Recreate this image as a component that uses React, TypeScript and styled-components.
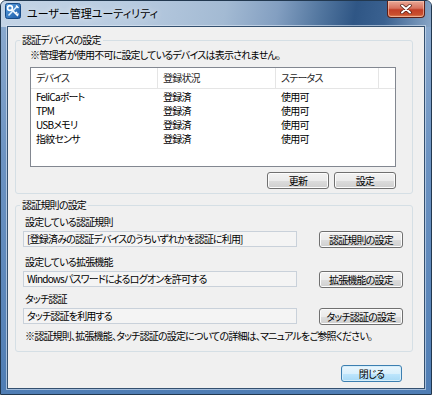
import React from "react";
import styled, { createGlobalStyle } from "styled-components";

const GlobalStyle = createGlobalStyle`
  html, body {
    margin: 0;
    padding: 0;
    width: 432px;
    height: 395px;
    overflow: hidden;
    background: #ffffff;
  }
  body {
    font-family: "Noto Sans CJK JP", sans-serif;
  }
`;

const Window = styled.div`
  width: 432px;
  height: 395px;
  box-sizing: border-box;
  display: flex;
  flex-direction: column;
  border: 1px solid #22384f;
  border-radius: 6px 6px 0 0;
  overflow: hidden;
  background: linear-gradient(180deg, #8fadd0 0%, #6c93c2 40%, #4f7db4 100%);
  font-family: "Noto Sans CJK JP", sans-serif;
  font-size: 10px;
  letter-spacing: -0.8px;
  font-feature-settings: "palt";
  color: #000;
`;

const TitleBar = styled.div`
  height: 26px;
  flex: none;
  display: flex;
  align-items: flex-start;
  padding-left: 4px;
  background: linear-gradient(
    100deg,
    #c4d4e6 0%,
    #b8cbe0 30%,
    #a3bad3 52%,
    #839fc1 64%,
    #52769f 74%,
    #2f5685 82%,
    #3a6190 89%,
    #88a5c6 100%
  );
`;

const AppIcon = styled.svg`
  width: 16px;
  height: 16px;
  margin-top: 2px;
  flex: none;
`;

const Title = styled.div`
  margin: 4px 0 0 6px;
  font-size: 11px;
  letter-spacing: 0;
  line-height: 16px;
  color: #000;
  text-shadow: 0 0 6px rgba(255, 255, 255, 0.9);
`;

const CloseButton = styled.div`
  margin-left: auto;
  margin-right: 6px;
  width: 38px;
  height: 17px;
  box-sizing: border-box;
  border: 1px solid #5b1f17;
  border-top: none;
  border-radius: 0 0 4px 4px;
  background: linear-gradient(180deg, #e9a896 0%, #d8735f 45%, #c23f27 55%, #c9502f 85%, #e08a5e 100%);
  box-shadow: inset 0 0 0 1px rgba(255, 210, 190, 0.55);
  display: flex;
  align-items: center;
  justify-content: center;
`;

const Client = styled.div`
  flex: 1;
  margin: 0 7px 6px 7px;
  background: #f0f0f0;
  box-shadow: 0 0 0 1px #34506f, 0 0 0 2px rgba(220, 232, 245, 0.6);
  padding: 13px 11px 0 7px;
  display: flex;
  flex-direction: column;
`;

const GroupBox = styled.div<{ $mt?: number }>`
  margin-top: ${(p) => p.$mt ?? 0}px;
  border: 1px solid #d5dfe5;
  border-radius: 3px;
  box-sizing: border-box;
  display: flex;
  flex-direction: column;
`;

const GroupTitle = styled.div`
  align-self: flex-start;
  margin: -8px 0 0 4px;
  padding: 0 2px;
  background: #f0f0f0;
  line-height: 14px;
`;

const GroupBody = styled.div<{ $pl: number; $pr: number; $pb: number }>`
  display: flex;
  flex-direction: column;
  padding: 0 ${(p) => p.$pr}px ${(p) => p.$pb}px ${(p) => p.$pl}px;
`;

const Note = styled.div<{ $mt: number; $pl?: number }>`
  margin-top: ${(p) => p.$mt}px;
  padding-left: ${(p) => p.$pl ?? 0}px;
  line-height: 14px;
  white-space: nowrap;
`;

const ListBox = styled.div`
  margin-top: 5px;
  height: 100px;
  box-sizing: border-box;
  border: 1px solid #828790;
  background: #ffffff;
`;

const Columns = "127px 118px 103px 1fr";

const ListHeader = styled.div`
  display: grid;
  grid-template-columns: ${Columns};
  height: 21px;
  box-sizing: border-box;
  border-bottom: 1px solid #e5e5e5;
`;

const HeaderCell = styled.div<{ $last?: boolean }>`
  padding-left: 5px;
  line-height: 20px;
  color: #1e1e1e;
  border-right: ${(p) => (p.$last ? "none" : "1px solid #e5e5e5")};
  white-space: nowrap;
`;

const ListBody = styled.div`
  padding-top: 1px;
`;

const ListRow = styled.div`
  display: grid;
  grid-template-columns: ${Columns};
  height: 14px;
`;

const Cell = styled.div`
  padding-left: 5px;
  line-height: 14px;
  white-space: nowrap;
`;

const ButtonRow = styled.div`
  margin-top: 5px;
  display: flex;
  justify-content: flex-end;
  gap: 5px;
`;

const Button = styled.div<{ $w: number; $default?: boolean }>`
  width: ${(p) => p.$w}px;
  height: 17px;
  box-sizing: border-box;
  flex: none;
  border: 1px solid ${(p) => (p.$default ? "#3c7fb1" : "#707070")};
  border-radius: 3px;
  background: ${(p) =>
    p.$default
      ? "linear-gradient(180deg, #eaf6fd 0%, #d9f0fc 50%, #bee6fd 51%, #a7d9f5 100%)"
      : "linear-gradient(180deg, #f2f2f2 0%, #ebebeb 50%, #dddddd 51%, #cfcfcf 100%)"};
  box-shadow: inset 0 0 0 1px ${(p) => (p.$default ? "#d6eefa" : "#fcfcfc")};
  line-height: 15px;
  text-align: center;
  white-space: nowrap;
`;

const FieldLabel = styled.div<{ $mt: number }>`
  margin-top: ${(p) => p.$mt}px;
  padding-left: 2px;
  line-height: 14px;
  white-space: nowrap;
`;

const FieldRow = styled.div`
  margin-top: 2px;
  display: flex;
  align-items: flex-start;
  gap: 22px;
`;

const Field = styled.div`
  flex: 1;
  height: 16px;
  box-sizing: border-box;
  border: 1px solid #c9d1da;
  background: #f4f4f4;
  padding-left: 3px;
  line-height: 14px;
  white-space: nowrap;
  overflow: hidden;
`;

const Footer = styled.div`
  margin-top: 13px;
  padding-right: 11px;
  display: flex;
  justify-content: flex-end;
`;

const devices = [
  { name: "FeliCaポート", reg: "登録済", status: "使用可" },
  { name: "TPM", reg: "登録済", status: "使用可" },
  { name: "USBメモリ", reg: "登録済", status: "使用可" },
  { name: "指紋センサ", reg: "登録済", status: "使用可" },
];

const settings = [
  { label: "設定している認証規則", value: "[登録済みの認証デバイスのうちいずれかを認証に利用]", button: "認証規則の設定", mt: 3 },
  { label: "設定している拡張機能", value: "Windowsパスワードによるログオンを許可する", button: "拡張機能の設定", mt: 7 },
  { label: "タッチ認証", value: "タッチ認証を利用する", button: "タッチ認証の設定", mt: 4 },
];

export default function App() {
  return (
    <>
      <GlobalStyle />
      <Window>
        <TitleBar>
          <AppIcon viewBox="0 0 16 16">
            <defs>
              <linearGradient id="ig" x1="0" y1="0" x2="1" y2="1">
                <stop offset="0" stopColor="#5aa0e0" />
                <stop offset="1" stopColor="#1c5aa6" />
              </linearGradient>
            </defs>
            <rect x="0.5" y="0.5" width="15" height="15" rx="2" fill="url(#ig)" stroke="#174a86" />
            <circle cx="5" cy="5" r="2.4" fill="none" stroke="#ffffff" strokeWidth="1.6" />
            <path d="M6.8 6.8 L13 13 M10.5 10.5 L12 9 M12 12 L13.5 10.5" stroke="#ffffff" strokeWidth="1.6" fill="none" />
            <path d="M12.5 3 L3.5 12.5" stroke="#dff0ff" strokeWidth="1.6" fill="none" />
            <path d="M11 2.5 L13.5 5" stroke="#ffffff" strokeWidth="1.4" fill="none" />
          </AppIcon>
          <Title>ユーザー管理ユーティリティ</Title>
          <CloseButton>
            <svg width="12" height="10" viewBox="0 0 12 10">
              <path d="M2 1.5 L10 8.5 M10 1.5 L2 8.5" stroke="#4a1a12" strokeWidth="3.4" strokeLinecap="round" />
              <path d="M2 1.5 L10 8.5 M10 1.5 L2 8.5" stroke="#ffffff" strokeWidth="2" strokeLinecap="round" />
            </svg>
          </CloseButton>
        </TitleBar>
        <Client>
          <GroupBox>
            <GroupTitle>認証デバイスの設定</GroupTitle>
            <GroupBody $pl={14} $pr={16} $pb={4}>
              <Note $mt={1}>※管理者が使用不可に設定しているデバイスは表示されません。</Note>
              <ListBox>
                <ListHeader>
                  <HeaderCell>デバイス</HeaderCell>
                  <HeaderCell>登録状況</HeaderCell>
                  <HeaderCell>ステータス</HeaderCell>
                  <HeaderCell $last />
                </ListHeader>
                <ListBody>
                  {devices.map((d) => (
                    <ListRow key={d.name}>
                      <Cell>{d.name}</Cell>
                      <Cell>{d.reg}</Cell>
                      <Cell>{d.status}</Cell>
                      <Cell />
                    </ListRow>
                  ))}
                </ListBody>
              </ListBox>
              <ButtonRow>
                <Button $w={62}>更新</Button>
                <Button $w={62}>設定</Button>
              </ButtonRow>
            </GroupBody>
          </GroupBox>
          <GroupBox $mt={11}>
            <GroupTitle>認証規則の設定</GroupTitle>
            <GroupBody $pl={7} $pr={9} $pb={8}>
              {settings.map((s) => (
                <React.Fragment key={s.label}>
                  <FieldLabel $mt={s.mt}>{s.label}</FieldLabel>
                  <FieldRow>
                    <Field>{s.value}</Field>
                    <Button $w={84}>{s.button}</Button>
                  </FieldRow>
                </React.Fragment>
              ))}
              <Note $mt={4} $pl={2}>
                ※認証規則、拡張機能、タッチ認証の設定についての詳細は、マニュアルをご参照ください。
              </Note>
            </GroupBody>
          </GroupBox>
          <Footer>
            <Button $w={61} $default>閉じる</Button>
          </Footer>
        </Client>
      </Window>
    </>
  );
}
